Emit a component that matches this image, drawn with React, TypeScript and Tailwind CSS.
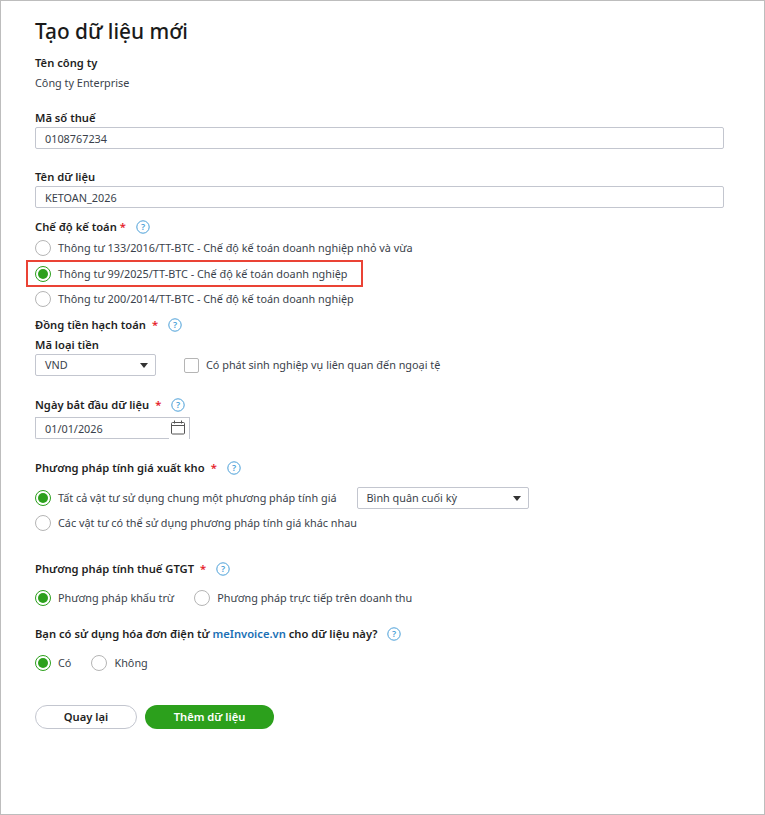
import React from "react";

function Help() {
  return (
    <svg width="14" height="14" viewBox="0 0 14 14" className="shrink-0" fill="none">
      <circle cx="7" cy="7" r="6.2" stroke="#4a9fd8" strokeWidth="1" />
      <text x="7" y="10.2" textAnchor="middle" fontSize="9" fill="#4a9fd8" fontFamily="Noto Sans">?</text>
    </svg>
  );
}

function Radio({ on }: { on?: boolean }) {
  return on ? (
    <span className="w-4 h-4 shrink-0 rounded-full border border-[#2ca01c] bg-white flex items-center justify-center">
      <span className="w-[10px] h-[10px] rounded-full bg-[#2ca01c]" />
    </span>
  ) : (
    <span className="w-4 h-4 shrink-0 rounded-full border border-[#b5b5b5] bg-white" />
  );
}

function Opt({ on, children }: { on?: boolean; children: React.ReactNode }) {
  return (
    <div className="flex items-center gap-[7px] text-[#3a3f4b] whitespace-nowrap">
      <Radio on={on} />
      <span>{children}</span>
    </div>
  );
}

function Label({ children, star, gap = "ml-[10px]", starGap = "ml-[5px]" }: { children: React.ReactNode; star?: boolean; gap?: string; starGap?: string }) {
  return (
    <div className="flex items-center h-[16px] text-[11.2px] font-semibold text-[#1f1f1f] whitespace-nowrap">
      <span>{children}</span>
      {star && <span className={`text-[#e5202a] ${starGap}`}>*</span>}
      <span className={gap}>
        <Help />
      </span>
    </div>
  );
}

function Plain({ children }: { children: React.ReactNode }) {
  return <div className="h-[16px] leading-[16px] text-[11.2px] font-semibold text-[#1f1f1f]">{children}</div>;
}

function Field({ value }: { value: string }) {
  return (
    <div className="h-[22px] w-[689px] mt-[1px] rounded-[2px] border border-[#c3c6cf] bg-white pl-[9px] flex items-center text-[#3a3f4b] pt-[1px]">
      {value}
    </div>
  );
}

function Caret() {
  return (
    <svg width="8" height="5" viewBox="0 0 8 5" className="shrink-0">
      <path d="M0 0h8L4 5z" fill="#333" />
    </svg>
  );
}

function Select({ value, cls }: { value: string; cls: string }) {
  return (
    <div className={`h-[22px] rounded-[2px] border border-[#c3c6cf] bg-white pl-[9px] pr-[7px] flex items-center justify-between text-[#3a3f4b] ${cls}`}>
      <span>{value}</span>
      <Caret />
    </div>
  );
}

export default function App() {
  return (
    <div className="w-[765px] h-[815px] border border-[#bdbdbd] bg-white pl-[34px] pt-[14px] text-[10.85px] leading-[16px] font-['Noto_Sans',sans-serif] overflow-hidden">
      <h1 className="text-[20.8px] leading-[32px] font-medium text-[#1a1a1a]">Tạo dữ liệu mới</h1>

      <div className="mt-[8px]"><Plain>Tên công ty</Plain></div>
      <div className="mt-[4px] text-[#3a3f4b]">Công ty Enterprise</div>

      <div className="mt-[19px]"><Plain>Mã số thuế</Plain></div>
      <Field value="0108767234" />

      <div className="mt-[20px]"><Plain>Tên dữ liệu</Plain></div>
      <Field value="KETOAN_2026" />

      <div className="mt-[11px]"><Label star gap="ml-[10px]" starGap="ml-[3px]">Chế độ kế toán</Label></div>
      <div className="mt-[5px]"><Opt>Thông tư 133/2016/TT-BTC - Chế độ kế toán doanh nghiệp nhỏ và vừa</Opt></div>
      <div className="mt-[4px] -ml-[9px] w-[337px] h-[27px] border-2 border-[#ea4335] pl-[7px] flex items-center">
        <Opt on>Thông tư 99/2025/TT-BTC - Chế độ kế toán doanh nghiệp</Opt>
      </div>
      <div className="mt-[4px]"><Opt>Thông tư 200/2014/TT-BTC - Chế độ kế toán doanh nghiệp</Opt></div>

      <div className="mt-[10px]"><Label star gap="ml-[10px]" starGap="ml-[6px]">Đồng tiền hạch toán</Label></div>
      <div className="mt-[4px]"><Plain>Mã loại tiền</Plain></div>
      <div className="mt-[1px] flex items-center">
        <Select value="VND" cls="w-[121px]" />
        <span className="ml-[28px] w-[15px] h-[15px] rounded-[2px] border border-[#b5b5b5] bg-white" />
        <span className="ml-[7px] text-[#3a3f4b]">Có phát sinh nghiệp vụ liên quan đến ngoại tệ</span>
      </div>

      <div className="mt-[21px]"><Label star starGap="ml-[6px]">Ngày bắt đầu dữ liệu</Label></div>
      <div className="mt-[4px] relative h-[22px] w-[155px] border-t border-r border-[#c3c6cf] pl-[10px] flex items-center text-[#3a3f4b]">
        <span>01/01/2026</span>
        <span className="absolute left-0 top-0 h-full w-[134px] border-l border-b border-[#c3c6cf] rounded-bl-[2px]" />
        <svg width="16" height="15" viewBox="0 0 16 15" fill="none" className="absolute right-[3px] top-[2px]" stroke="#555">
          <rect x="1.5" y="2.5" width="13" height="11.5" rx="1" />
          <path d="M1.5 5.5h13M4.5 0.5v3M11.5 0.5v3" />
        </svg>
      </div>

      <div className="mt-[21px]"><Label star starGap="ml-[6px]">Phương pháp tính giá xuất kho</Label></div>
      <div className="mt-[11px] flex items-center">
        <Opt on>Tất cả vật tư sử dụng chung một phương pháp tính giá</Opt>
        <Select value="Bình quân cuối kỳ" cls="w-[172px] ml-[20px]" />
      </div>
      <div className="mt-[6px]"><Opt>Các vật tư có thể sử dụng phương pháp tính giá khác nhau</Opt></div>

      <div className="mt-[30px]"><Label star starGap="ml-[6px]">Phương pháp tính thuế GTGT</Label></div>
      <div className="mt-[13px] flex items-center gap-[20px]">
        <Opt on>Phương pháp khấu trừ</Opt>
        <Opt>Phương pháp trực tiếp trên doanh thu</Opt>
      </div>

      <div className="mt-[20px]">
        <Label>
          Bạn có sử dụng hóa đơn điện tử <span className="text-[#1a6fb5]">meInvoice.vn</span> cho dữ liệu này?
        </Label>
      </div>
      <div className="mt-[13px] flex items-center gap-[20px]">
        <Opt on>Có</Opt>
        <Opt>Không</Opt>
      </div>

      <div className="mt-[34px] flex items-center gap-[8px]">
        <button className="w-[102px] h-[24px] rounded-full border border-[#c3c6cf] bg-white text-[11.2px] font-semibold text-[#1f1f1f]">Quay lại</button>
        <button className="w-[129px] h-[24px] rounded-full bg-[#2ca01c] text-[11.2px] font-semibold text-white">Thêm dữ liệu</button>
      </div>
    </div>
  );
}
